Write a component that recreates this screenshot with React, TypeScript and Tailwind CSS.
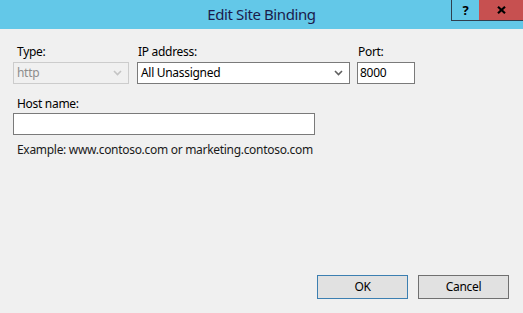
const font = { fontFamily: '"Segoe UI", "Noto Sans", sans-serif' };

function Chevron({ disabled }: { disabled?: boolean }) {
  return (
    <svg width="9" height="6" viewBox="0 0 9 6" className="shrink-0">
      <path
        d="M1 1 L4.5 4.5 L8 1"
        fill="none"
        stroke={disabled ? "#c4c4c4" : "#606060"}
        strokeWidth="1.6"
      />
    </svg>
  );
}

export default function App() {
  return (
    <div
      className="w-[523px] h-[313px] bg-[#f0f0f0] flex flex-col overflow-hidden text-[12px] tracking-[-0.3px] text-black"
      style={font}
    >
      {/* title bar */}
      <div className="relative h-[29px] bg-[#63c8e8] flex items-center justify-center shrink-0">
        <span className="text-[15px] tracking-[-0.4px] text-[#1b1b4b] pb-[1px]">Edit Site Binding</span>
        <div className="absolute right-0 top-0 flex h-[21px] tracking-normal">
          <div className="w-[28px] border-l border-b border-[#2f3f4f] bg-[#63c8e8] flex items-center justify-center">
            <span className="font-bold text-[13px] leading-none">?</span>
          </div>
          <div className="w-[44px] border-b border-[#2f3f4f] bg-[#c75050] flex items-center justify-center">
            <svg width="9" height="8" viewBox="0 0 9 8">
              <path d="M1 0.8 L8 7.2 M8 0.8 L1 7.2" stroke="#000" strokeWidth="2.2" />
            </svg>
          </div>
        </div>
      </div>

      <div className="flex-1 flex flex-col px-[13px] pt-[14px] pb-[14px]">
        {/* first row */}
        <div className="flex">
          <div className="flex flex-col w-[116px]">
            <label className="pl-[4px] h-[19px] leading-[18px]">Type:</label>
            <div className="h-[22px] bg-[#f0f0f0] border border-[#cccccc] flex items-center justify-between pl-[3px] pr-[6px] text-[#8d8d8d]">
              <span>http</span>
              <Chevron disabled />
            </div>
          </div>
          <div className="flex flex-col w-[213px] ml-[8px]">
            <label className="pl-[1px] h-[19px] leading-[18px]">IP address:</label>
            <div className="h-[22px] bg-white border border-[#7a7a7a] flex items-center justify-between pl-[3px] pr-[6px]">
              <span>All Unassigned</span>
              <Chevron />
            </div>
          </div>
          <div className="flex flex-col w-[58px] ml-[7px]">
            <label className="pl-[1px] h-[19px] leading-[18px]">Port:</label>
            <div className="h-[22px] bg-white border border-[#7a7a7a] flex items-center pl-[2px]">
              <span>8000</span>
            </div>
          </div>
        </div>

        {/* host name */}
        <label className="pl-[4px] mt-[12px] h-[17px] leading-[16px]">Host name:</label>
        <div className="w-[302px] h-[22px] bg-white border border-[#7a7a7a]" />
        <p className="pl-[4px] mt-[6px] text-[#1a1a1a]">
          Example: www.contoso.com or marketing.contoso.com
        </p>

        {/* buttons */}
        <div className="mt-auto flex justify-end gap-[10px] pr-[1px]">
          <button className="w-[91px] h-[24px] bg-[#e1e1e1] border border-[#3c7fb1]">OK</button>
          <button className="w-[91px] h-[24px] bg-[#e1e1e1] border border-[#707070]">Cancel</button>
        </div>
      </div>
    </div>
  );
}
